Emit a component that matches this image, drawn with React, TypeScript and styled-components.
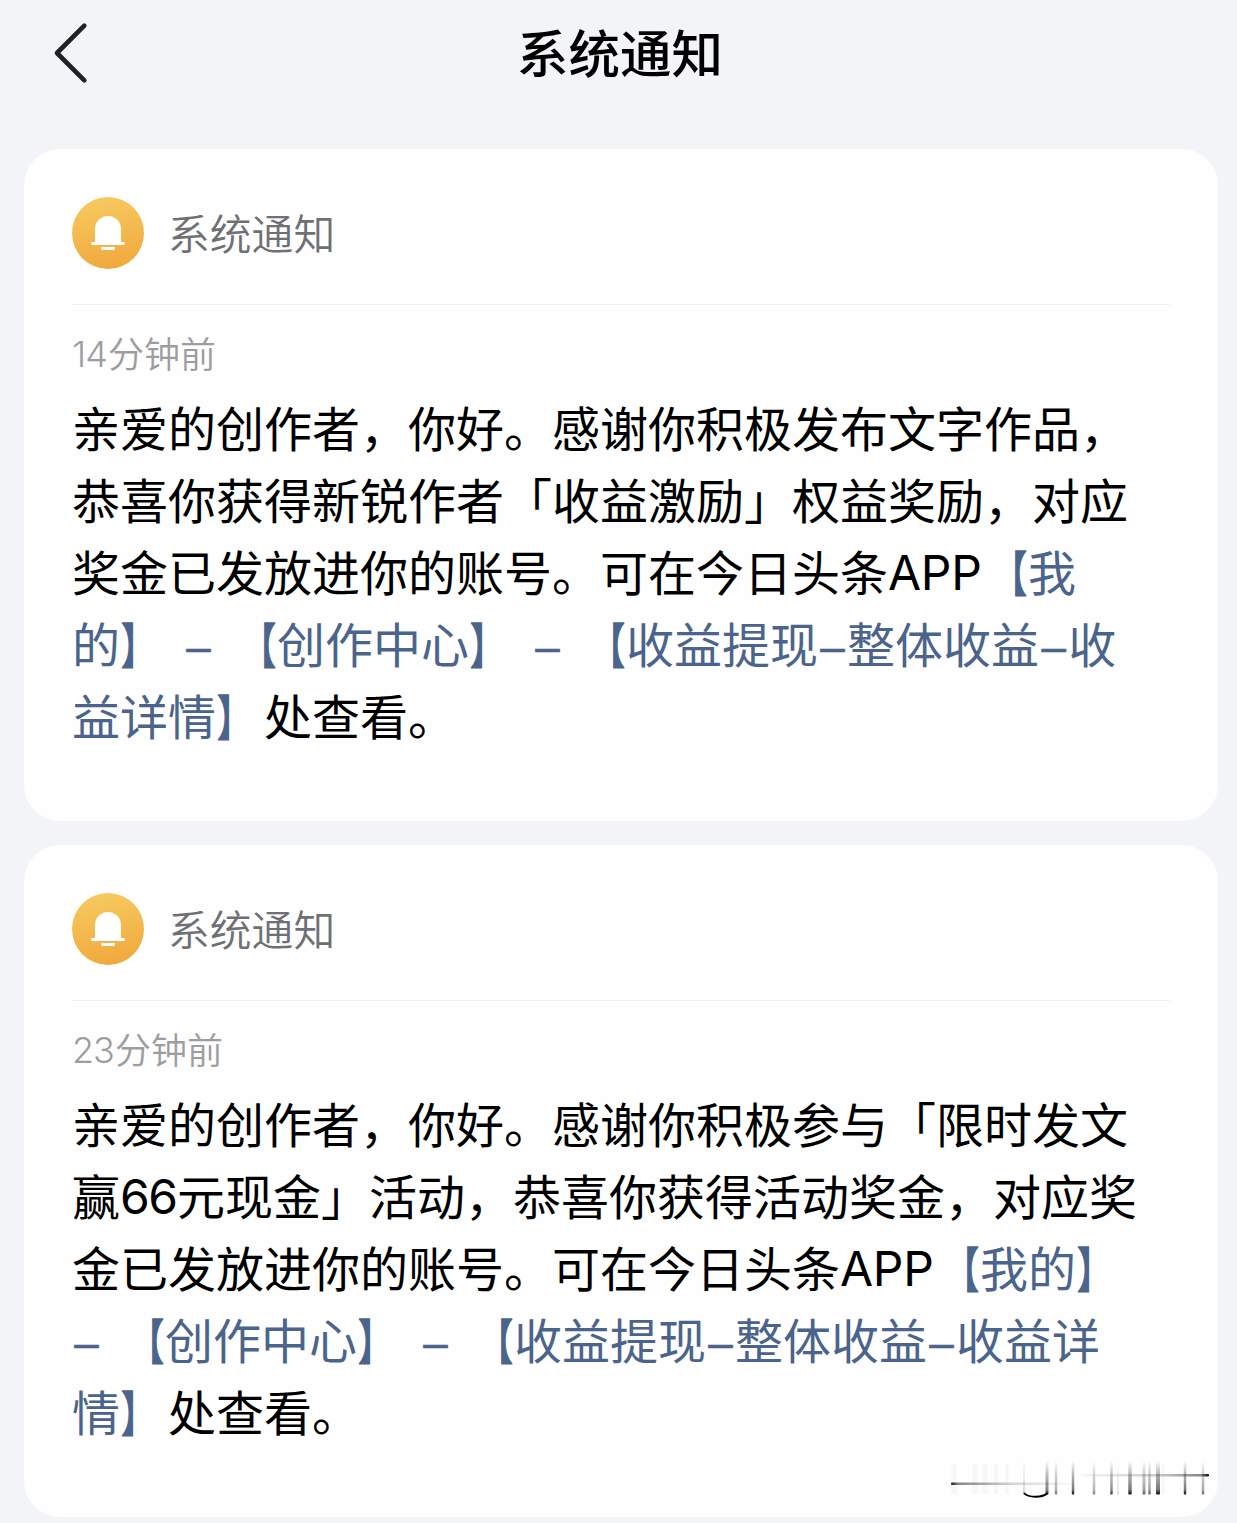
import React from "react";
import styled, { createGlobalStyle } from "styled-components";

const GlobalStyle = createGlobalStyle`
  * { box-sizing: border-box; }
  body {
    margin: 0;
    background: #f3f4f7;
    font-family: "Noto Sans CJK SC", sans-serif;
    color: #000;
  }
`;

const Page = styled.div`
  width: 1237px;
  height: 1523px;
  overflow: hidden;
  display: flex;
  flex-direction: column;
  background: #f3f4f7;
`;

const NavBar = styled.header`
  flex: none;
  height: 149px;
  display: grid;
  grid-template-columns: 120px 1fr 120px;
  align-items: start;
`;

const BackButton = styled.button`
  margin: 20px 0 0 50px;
  padding: 0;
  border: 0;
  width: 42px;
  height: 66px;
  background: none;
  svg { display: block; }
`;

const Title = styled.h1`
  margin: 13px 0 0 3px;
  font-size: 51.5px;
  line-height: 76px;
  font-weight: 500;
  text-align: center;
`;

const Feed = styled.main`
  display: flex;
  flex-direction: column;
  gap: 24px;
  padding: 0 19px 0 24px;
`;

const Card = styled.article`
  position: relative;
  height: 672px;
  padding: 48px 48px 0;
  border-radius: 36px;
  background: #fefefe;
`;

const CardHeader = styled.div`
  display: flex;
  align-items: flex-start;
  gap: 24px;
  height: 108px;
  border-bottom: 1px solid #f1f1f2;
`;

const Badge = styled.div`
  width: 72px;
  height: 72px;
  border-radius: 50%;
  background: linear-gradient(170deg, #f7cc62 0%, #f0a63a 100%);
  svg { display: block; }
`;

const Sender = styled.span`
  font-size: 41.8px;
  line-height: 70px;
  color: #6f7074;
  font-weight: 350;
`;

const Time = styled.div`
  margin-top: 21px;
  height: 52px;
  font-size: 36px;
  line-height: 52px;
  color: #9c9da0;
  font-weight: 350;
  white-space: nowrap;
`;

const Message = styled.p`
  margin: 12px 0 0;
  font-size: 48px;
  line-height: 72px;
`;

const Line = styled.span`
  display: block;
  height: 72px;
  white-space: nowrap;
`;

const Link = styled.span`
  color: #4b648c;
`;

const Latin = styled.span<{ $width: number; $tight: number; $weight?: number }>`
  display: inline-block;
  width: ${(p) => p.$width}px;
  font-family: Inter, "Liberation Sans", sans-serif;
  font-weight: ${(p) => p.$weight ?? 400};
  line-height: 1;
  letter-spacing: ${(p) => -p.$tight}px;
  vertical-align: 1px;
`;

const Bracket = styled.span<{ $side: "left" | "right" }>`
  display: inline-block;
  transform: scaleX(0.7);
  transform-origin: ${(p) => (p.$side === "left" ? "92%" : "8%")} 50%;
  -webkit-text-stroke: 1.5px currentColor;
`;

const DashSlot = styled.span<{ $before?: number; $after?: number }>`
  display: inline-block;
  width: 29px;
  margin-left: ${(p) => p.$before ?? 0}px;
  margin-right: ${(p) => p.$after ?? 0}px;
  font-family: "Liberation Sans", Arial, sans-serif;
  font-size: 44px;
  line-height: 1;
  text-align: center;
  vertical-align: 1px;
  -webkit-text-stroke: 0.5px currentColor;
`;

const Watermark = styled.svg`
  position: absolute;
  left: 921px;
  top: 610px;
`;

const Dash = (p: { before?: number; after?: number }) => (
  <DashSlot $before={p.before} $after={p.after}>–</DashSlot>
);

const Open = () => <Bracket $side="left">【</Bracket>;
const Close = () => <Bracket $side="right">】</Bracket>;

const Bell = () => (
  <svg width="72" height="72" viewBox="0 0 72 72" fill="#fff">
    <path d="M23 46V32a13 13 0 0 1 26 0v14z" />
    <rect x="19" y="45" width="34" height="3" rx="1.5" />
    <path d="M29 50h14v1a2 2 0 0 1-2 2H31a2 2 0 0 1-2-2z" />
  </svg>
);

const strokes = [
  { x: 73, w: 1.5, o: 0.3 },
  { x: 96, w: 3, o: 0.85 },
  { x: 105, w: 2.5, o: 0.55 },
  { x: 122, w: 2.5, o: 0.95 },
  { x: 143, w: 2.5, o: 0.5 },
  { x: 160.5, w: 2.5, o: 0.8 },
  { x: 167, w: 1.5, o: 0.2 },
  { x: 179, w: 3.5, o: 0.95 },
  { x: 193, w: 3, o: 0.65 },
  { x: 198.5, w: 2.5, o: 0.65 },
  { x: 207, w: 4, o: 0.95 },
  { x: 234, w: 2.5, o: 0.95 },
  { x: 252, w: 2.5, o: 0.6 },
];

const ghosts = [
  { x: 3, w: 5 },
  { x: 24, w: 5 },
  { x: 34, w: 5 },
  { x: 45, w: 4 },
  { x: 56, w: 3 },
  { x: 212, w: 3 },
];

const Mark = () => (
  <Watermark width="270" height="50" viewBox="-6 0 270 50">
    <defs>
      <linearGradient id="fall" x1="0" y1="0" x2="0" y2="1">
        <stop offset="0" stopColor="#111" stopOpacity="0" />
        <stop offset="0.4" stopColor="#111" stopOpacity="0.32" />
        <stop offset="0.85" stopColor="#111" stopOpacity="0.6" />
        <stop offset="1" stopColor="#000" stopOpacity="1" />
      </linearGradient>
      <linearGradient id="left" x1="0" y1="0" x2="1" y2="0">
        <stop offset="0" stopColor="#111" stopOpacity="0.95" />
        <stop offset="0.06" stopColor="#111" stopOpacity="0.5" />
        <stop offset="0.5" stopColor="#111" stopOpacity="0.18" />
        <stop offset="1" stopColor="#111" stopOpacity="0.02" />
      </linearGradient>
      <linearGradient id="right" x1="0" y1="0" x2="1" y2="0">
        <stop offset="0" stopColor="#111" stopOpacity="0.03" />
        <stop offset="0.6" stopColor="#111" stopOpacity="0.22" />
        <stop offset="0.94" stopColor="#111" stopOpacity="0.5" />
        <stop offset="1" stopColor="#000" stopOpacity="1" />
      </linearGradient>
    </defs>
    {ghosts.map((g) => (
      <rect key={g.x} x={g.x - g.w / 2} y="9" width={g.w} height="30" fill="#111" opacity="0.03" />
    ))}
    {strokes.map((s) => (
      <rect key={s.x} x={s.x - s.w / 2} y="6" width={s.w} height="33.5" rx="1" fill="url(#fall)" opacity={s.o} />
    ))}
    <path d="M73 38c4 5 19 5 23.500 0" fill="none" stroke="#000" strokeWidth="2" />
    <rect x="0" y="27.5" width="120" height="2.5" rx="1" fill="url(#left)" />
    <rect x="130" y="19" width="128" height="2.5" rx="1" fill="url(#right)" />
  </Watermark>
);

const Header = () => (
  <CardHeader>
    <Badge><Bell /></Badge>
    <Sender>系统通知</Sender>
  </CardHeader>
);

export default function App() {
  return (
    <Page>
      <GlobalStyle />
      <NavBar>
        <BackButton aria-label="返回">
          <svg width="42" height="66" viewBox="0 0 42 66" fill="none" stroke="#202126" strokeWidth="4.6" strokeLinecap="round" strokeLinejoin="round">
            <path d="M34.3 5.7L7 33l27.3 27.3" />
          </svg>
        </BackButton>
        <Title>系统通知</Title>
      </NavBar>
      <Feed>
        <Card>
          <Header />
          <Time><Latin $width={36} $tight={1} $weight={350}>14</Latin>分钟前</Time>
          <Message>
            <Line>亲爱的创作者，你好。感谢你积极发布文字作品，</Line>
            <Line>恭喜你获得新锐作者「收益激励」权益奖励，对应</Line>
            <Line>奖金已发放进你的账号。可在今日头条<Latin $width={92} $tight={0.3}>APP</Latin><Link><Open />我</Link></Line>
            <Line><Link>的<Close /><Dash before={16} after={16} /><Open />创作中心<Close /><Dash before={16} after={16} /><Open />收益提现<Dash />整体收益<Dash />收</Link></Line>
            <Line><Link>益详情<Close /></Link>处查看。</Line>
          </Message>
        </Card>
        <Card>
          <Header />
          <Time><Latin $width={43} $tight={1} $weight={350}>23</Latin>分钟前</Time>
          <Message>
            <Line>亲爱的创作者，你好。感谢你积极参与「限时发文</Line>
            <Line>赢<Latin $width={57} $tight={1.5}>66</Latin>元现金」活动，恭喜你获得活动奖金，对应奖</Line>
            <Line>金已发放进你的账号。可在今日头条<Latin $width={92} $tight={0.3}>APP</Latin><Link><Open />我的<Close /></Link></Line>
            <Line><Link><Dash after={16} /><Open />创作中心<Close /><Dash before={16} after={16} /><Open />收益提现<Dash />整体收益<Dash />收益详</Link></Line>
            <Line><Link>情<Close /></Link>处查看。</Line>
          </Message>
          <Mark />
        </Card>
      </Feed>
    </Page>
  );
}
